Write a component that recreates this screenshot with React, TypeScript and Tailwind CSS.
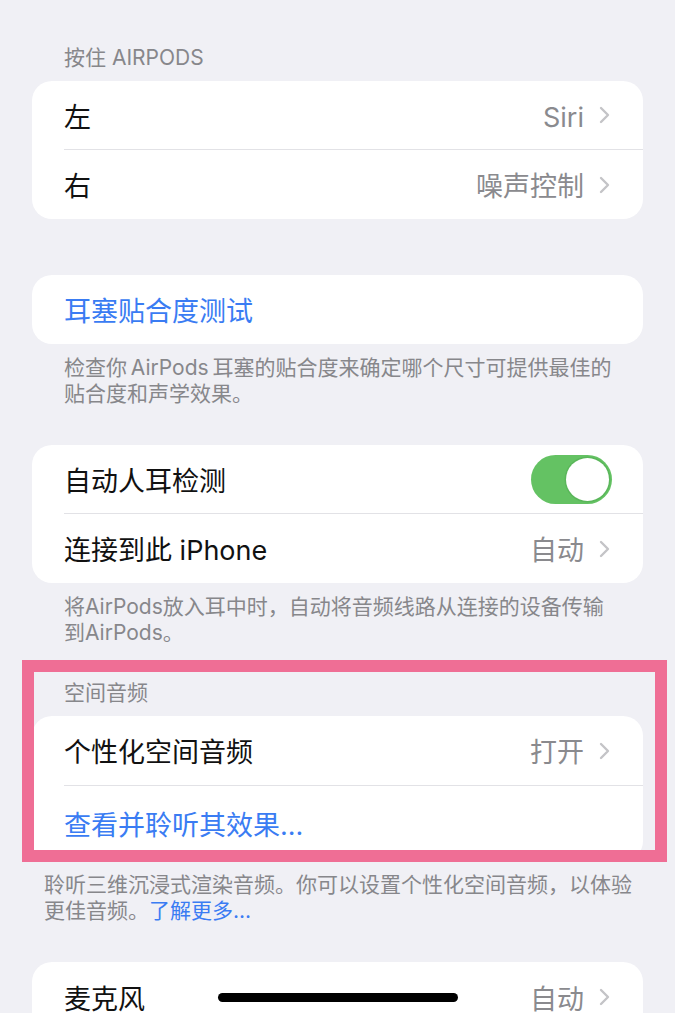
import React from "react";

const font = {
  fontFamily: 'Inter, "Noto Sans CJK SC", "Noto Sans", sans-serif',
};

function Chevron() {
  return (
    <svg width="11" height="18" viewBox="0 0 11 18" className="ml-[15px] shrink-0">
      <polyline
        points="2,2 9,9 2,16"
        fill="none"
        stroke="#c4c4c7"
        strokeWidth="2.4"
        strokeLinecap="round"
        strokeLinejoin="round"
      />
    </svg>
  );
}

function Row({
  label,
  value,
  last,
  blue,
  toggle,
  h = "h-[69px]",
}: {
  label: string;
  value?: string;
  last?: boolean;
  blue?: boolean;
  toggle?: boolean;
  h?: string;
}) {
  return (
    <div className="pl-[32px]">
      <div
        className={`flex items-center pr-[33px] ${h} ${
          last ? "" : "border-b border-[#e2e2e6]"
        }`}
      >
        <span
          className={`translate-y-[2px] whitespace-nowrap text-[27px] leading-none ${
            blue ? "text-[#3a7cf3]" : "text-[#111]"
          }`}
        >
          {label}
        </span>
        <div className="flex-1" />
        {value && (
          <>
            <span className="translate-y-[2px] whitespace-nowrap text-[27px] leading-none text-[#8a8a8e]">
              {value}
            </span>
            <Chevron />
          </>
        )}
        {toggle && (
          <span className="relative mr-[-2px] flex h-[49px] w-[81px] items-center rounded-full bg-[#64c263]">
            <span className="absolute right-[3px] h-[43px] w-[43px] rounded-full bg-white shadow-[0_0_0_1.5px_#5ab65a]" />
          </span>
        )}
      </div>
    </div>
  );
}

function Card({ children, className = "" }: { children: React.ReactNode; className?: string }) {
  return (
    <div className={`mx-[32px] w-[611px] overflow-hidden rounded-[20px] bg-white ${className}`}>
      {children}
    </div>
  );
}

function Note({ children, className = "" }: { children: React.ReactNode; className?: string }) {
  return (
    <p className={`whitespace-nowrap text-[21px] leading-[26px] text-[#87878b] ${className}`}>
      {children}
    </p>
  );
}

export default function App() {
  return (
    <div className="h-[1027px] w-[680px] bg-white" style={font}>
      <div className="relative h-[1013px] w-[675px] overflow-hidden bg-[#f0f0f5]">
        <div className="flex flex-col">
          {/* Press and hold */}
          <Note className="mb-[10px] pl-[64px] pt-[45px]">按住 AIRPODS</Note>
          <Card>
            <Row label="左" value="Siri" />
            <Row label="右" value="噪声控制" last />
          </Card>

          {/* Ear tip fit test */}
          <Card className="mt-[56px]">
            <Row label="耳塞贴合度测试" blue last />
          </Card>
          <Note className="mt-[11px] pl-[64px]">
            检查你{"\u2009"}AirPods{"\u2009"}耳塞的贴合度来确定哪个尺寸可提供最佳的
            <br />
            贴合度和声学效果。
          </Note>

          {/* Ear detection */}
          <Card className="mt-[38px]">
            <Row label="自动人耳检测" toggle />
            <Row label="连接到此 iPhone" value="自动" last />
          </Card>
          <Note className="mt-[11px] pl-[64px]">
            将AirPods放入耳中时，自动将音频线路从连接的设备传输
            <br />
            到AirPods。
          </Note>

          {/* Spatial audio */}
          <Note className="mb-[10px] mt-[34px] pl-[64px]">空间音频</Note>
          <Card>
            <Row label="个性化空间音频" value="打开" h="h-[70px]" />
            <Row label="查看并聆听其效果..." blue last h="h-[75px]" />
          </Card>
          <Note className="mt-[11px] pl-[44px]">
            聆听三维沉浸式渲染音频。你可以设置个性化空间音频，以体验
            <br />
            更佳音频。<span className="text-[#3a7cf3]">了解更多...</span>
          </Note>

          {/* Microphone */}
          <Card className="mt-[38px]">
            <Row label="麦克风" value="自动" last h="h-[70px]" />
          </Card>
        </div>

        {/* highlight frame around the spatial audio group */}
        <div className="pointer-events-none absolute left-[22px] top-[660px] h-[202px] w-[645px] border-[12px] border-[#ef6e95]" />

        {/* home indicator */}
        <div className="absolute left-[218px] top-[993px] h-[9px] w-[240px] rounded-full bg-black" />
      </div>
    </div>
  );
}
